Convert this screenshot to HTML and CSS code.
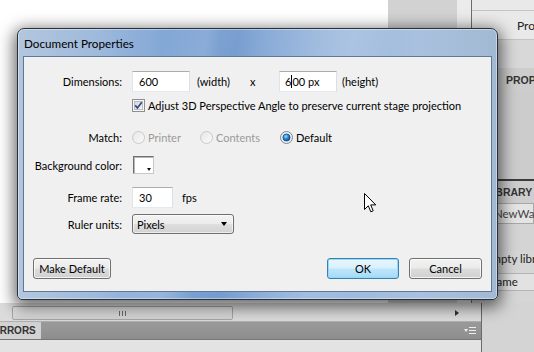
FILE: index.html
```html
<!DOCTYPE html>
<html>
<head>
<meta charset="utf-8">
<link rel="stylesheet" href="styles.css">
</head>
<body>
<div class="app">
  <div class="upper">
    <div class="stage"></div>
    <div class="gutter"><div class="gutter-dark"></div><div class="gutter-light"></div></div>
    <div class="side">
      <div class="side-top"></div>
      <div class="side-row">Profile</div>
      <div class="side-gap"></div>
      <div class="side-head">PROPERTIES</div>
      <div class="side-fill"></div>
      <div class="lib-head">LIBRARY</div>
      <div class="lib-doc">NewWave.fla</div>
      <div class="lib-gap"></div>
      <div class="lib-empty">Empty library</div>
      <div class="lib-col">Name</div>
      <div class="lib-rest"></div>
    </div>
  </div>
  <div class="lower">
    <div class="lower-left">
      <div class="hscroll">
        <div class="thumb"><span class="grip"></span><span class="grip"></span><span class="grip"></span></div>
        <span class="arrow-r"></span>
      </div>
      <div class="tabbar">
        <div class="tab"><span class="tab-text">ERRORS</span></div>
        <span class="menu"><span class="menu-tri"></span><span class="menu-lines"></span></span>
      </div>
      <div class="errbody"></div>
    </div>
    <div class="lower-right"></div>
  </div>

  <div class="dialog">
    <div class="titlebar">Document Properties</div>
    <div class="panel">
      <div class="row r-dim">
        <div class="label">Dimensions:</div>
        <div class="ctrls">
          <div class="input w58">600</div>
          <span class="t-width">(width)</span>
          <span class="t-x">x</span>
          <div class="input w58 in2">6<span class="caret"></span>00 px</div>
          <span class="t-height">(height)</span>
        </div>
      </div>
      <div class="row r-chk">
        <div class="label"></div>
        <div class="ctrls">
          <svg class="chk" width="13" height="13" viewBox="0 0 13 13">
            <defs>
              <linearGradient id="cg" x1="0" y1="0" x2="1" y2="1">
                <stop offset="0" stop-color="#d0d6df"/>
                <stop offset="1" stop-color="#f4f6f9"/>
              </linearGradient>
            </defs>
            <rect x="0.5" y="0.5" width="12" height="12" fill="#f6f6f6" stroke="#8e8f8f"/>
            <rect x="2.5" y="2.5" width="8" height="8" fill="url(#cg)" stroke="#b8bec8"/>
            <path d="M3.2 6.4 L5.4 9 L9.8 3.2" stroke="#35477e" stroke-width="1.7" fill="none"/>
          </svg>
          <span class="chk-label">Adjust 3D Perspective Angle to preserve current stage projection</span>
        </div>
      </div>
      <div class="row r-match">
        <div class="label">Match:</div>
        <div class="ctrls">
          <span class="radio-item ri-printer">
            <svg width="13" height="13" viewBox="0 0 13 13">
              <defs>
                <linearGradient id="rg" x1="0" y1="0" x2="1" y2="1">
                  <stop offset="0" stop-color="#e6e6e6"/>
                  <stop offset="1" stop-color="#fbfbfb"/>
                </linearGradient>
              </defs>
              <circle cx="6.5" cy="6.5" r="6" fill="url(#rg)" stroke="#c9c9c9"/>
            </svg>
            <span class="dis">Printer</span>
          </span>
          <span class="radio-item ri-contents">
            <svg width="13" height="13" viewBox="0 0 13 13">
              <circle cx="6.5" cy="6.5" r="6" fill="url(#rg)" stroke="#c9c9c9"/>
            </svg>
            <span class="dis">Contents</span>
          </span>
          <span class="radio-item ri-default">
            <svg width="13" height="13" viewBox="0 0 13 13">
              <defs>
                <radialGradient id="dot" cx="0.4" cy="0.35" r="0.7">
                  <stop offset="0" stop-color="#8ee0ff"/>
                  <stop offset="0.45" stop-color="#2e8fd8"/>
                  <stop offset="1" stop-color="#0d3c78"/>
                </radialGradient>
              </defs>
              <circle cx="6.5" cy="6.5" r="6" fill="#eef0f3" stroke="#7e858d"/>
              <circle cx="6.5" cy="6.5" r="3.6" fill="url(#dot)" stroke="#1d4d85" stroke-width="0.8"/>
            </svg>
            <span>Default</span>
          </span>
        </div>
      </div>
      <div class="row r-bg">
        <div class="label">Background color:</div>
        <div class="ctrls">
          <div class="swatch"><span class="sw-tri"></span></div>
        </div>
      </div>
      <div class="row r-fr">
        <div class="label">Frame rate:</div>
        <div class="ctrls">
          <div class="input w41">30</div>
          <span class="t-fps">fps</span>
        </div>
      </div>
      <div class="row r-ru">
        <div class="label">Ruler units:</div>
        <div class="ctrls">
          <div class="select"><span>Pixels</span><span class="sel-tri"></span></div>
        </div>
      </div>
      <div class="buttons">
        <div class="btn btn-md">Make Default</div>
        <div class="spacer"></div>
        <div class="btn btn-ok">OK</div>
        <div class="btn btn-cancel">Cancel</div>
      </div>
    </div>
  </div>

  <svg class="cursor" width="13" height="20" viewBox="0 0 13 20">
    <path d="M0.5 0.5 L0.5 16.5 L4.3 12.8 L6.8 18.8 L9.2 17.8 L6.7 11.9 L11.8 11.9 Z" fill="#fff" stroke="#000" stroke-width="1"/>
  </svg>
</div>
</body>
</html>
```

FILE: styles.css
```css
* { box-sizing: border-box; }
html, body { margin: 0; padding: 0; }
body {
  width: 534px;
  height: 352px;
  overflow: hidden;
  font-family: "Lato", "Noto Sans", sans-serif;
  font-size: 11px;
  color: #000;
}
.app {
  position: relative;
  width: 534px;
  height: 352px;
  display: flex;
  flex-direction: column;
  background: #d8d8d8;
}
.upper {
  display: flex;
  height: 303px;
}
.stage {
  width: 388px;
  background: #fff;
}
.gutter {
  width: 84px;
  display: flex;
  border-right: 1px solid #6d6d6d;
}
.gutter-dark { width: 69px; background: #d2d2d2; }
.gutter-light { flex: 1; background: #ebebeb; }
.side {
  width: 62px;
  display: flex;
  flex-direction: column;
  background: #d6d6d6;
  font-size: 11.5px;
  white-space: nowrap;
  overflow: hidden;
}
.side-top { height: 11px; background: #e9e9e9; border-bottom: 1px solid #c4c4c4; }
.side-row {
  height: 29px;
  background: #e9e9e9;
  border-bottom: 1px solid #c4c4c4;
  padding-left: 45px;
  line-height: 29px;
  font-size: 12px;
  color: #222;
}
.side-gap { height: 28px; background: #d8d8d8; }
.side-head {
  height: 24px;
  line-height: 24px;
  background: #cdcdcd;
  padding-left: 34px;
  font-family: "Liberation Sans", sans-serif;
  font-weight: bold;
  font-size: 10.5px;
  color: #333;
}
.side-fill { height: 89px; background: #cccccc; border-bottom: 2px solid #3c3c3c; }
.lib-head {
  height: 22px;
  line-height: 22px;
  background: #cdcdcd;
  padding-left: 14px;
  font-family: "Liberation Sans", sans-serif;
  font-weight: bold;
  font-size: 10.5px;
  color: #333;
}
.lib-doc {
  height: 21px;
  line-height: 19px;
  margin-left: 12px;
  background: #e4e4e4;
  border: 1px solid #a8a8a8;
  padding-left: 9px;
  color: #444;
}
.lib-gap { height: 27px; background: #d4d4d4; }
.lib-empty {
  height: 22px;
  line-height: 16px;
  padding-left: 13px;
  color: #222;
}
.lib-col {
  height: 18px;
  line-height: 16px;
  background: #e2e2e2;
  border-top: 1px solid #b5b5b5;
  border-bottom: 1px solid #b5b5b5;
  padding-left: 16px;
  color: #222;
}
.lib-rest { flex: 1; background: #d6d6d6; }

.lower { display: flex; flex: 1; }
.lower-left {
  width: 482px;
  display: flex;
  flex-direction: column;
  border-right: 1px solid #6a6a6a;
}
.lower-right { flex: 1; background: #d4d4d4; }
.hscroll {
  height: 19px;
  background: #dcdcdc;
  display: flex;
  align-items: center;
  padding-left: 12px;
  border-bottom: 1px solid #b0b0b0;
}
.thumb {
  width: 221px;
  height: 14px;
  margin-top: 2px;
  border: 1px solid #a6a6a6;
  border-radius: 2px;
  background: linear-gradient(#e6e6e6, #d4d4d4);
  display: flex;
  justify-content: center;
  align-items: center;
  gap: 2px;
}
.grip { width: 1px; height: 5px; background: #6c6c6c; }
.arrow-r {
  margin-left: auto;
  margin-right: 22px;
  margin-top: 2px;
  width: 0; height: 0;
  border-top: 3px solid transparent;
  border-bottom: 3px solid transparent;
  border-left: 4px solid #333;
}
.tabbar {
  height: 18px;
  background: linear-gradient(#9b9b9b, #8d8d8d);
  display: flex;
  align-items: stretch;
  border-bottom: 1px solid #777;
}
.tab {
  width: 41px;
  background: #d2d2d2;
  overflow: hidden;
  white-space: nowrap;
  font-family: "Liberation Sans", sans-serif;
  font-weight: bold;
  font-size: 10px;
  line-height: 18px;
  color: #333;
}
.tab-text { margin-left: -7px; }
.menu {
  margin-left: auto;
  margin-right: 5px;
  display: flex;
  align-items: center;
  gap: 1px;
}
.menu-tri {
  width: 0; height: 0;
  border-left: 2px solid transparent;
  border-right: 2px solid transparent;
  border-top: 3px solid #eee;
}
.menu-lines {
  width: 7px;
  height: 7px;
  background: linear-gradient(#eee 0 1px, transparent 1px 3px, #eee 3px 4px, transparent 4px 6px, #eee 6px 7px);
}
.errbody { flex: 1; background: #e3e3e3; }

/* Dialog */
.dialog {
  position: absolute;
  left: 17px;
  top: 28px;
  width: 481px;
  height: 272px;
  border: 1px solid #27313d;
  border-radius: 7px 7px 5px 5px;
  background:
    linear-gradient(100deg, rgba(255,255,255,0) 28%, rgba(255,255,255,0.16) 36%, rgba(255,255,255,0) 42%, rgba(255,255,255,0.14) 64%, rgba(255,255,255,0) 72%),
    linear-gradient(90deg, #b3c6dd 0%, #9fbadc 16%, #84a8d6 30%, #7098cd 42%, #86a9d6 52%, #9bb8dd 66%, #a9c1de 84%, #a2b9d3 100%);
  box-shadow: 0 4px 16px 3px rgba(0,0,0,0.6), inset 0 0 0 1px rgba(255,255,255,0.4);
  display: flex;
  flex-direction: column;
}
.titlebar {
  height: 27px;
  padding-left: 6px;
  padding-top: 1px;
  line-height: 26px;
  font-size: 11.7px;
  color: #000;
}
.panel {
  margin: 0 5px 7px 5px;
  flex: 1;
  background: #f0f0f0;
  border: 1px solid #5f7896;
  padding: 14px 9px 0 0;
  display: flex;
  flex-direction: column;
}
.row {
  display: flex;
  align-items: center;
}
.label {
  width: 98px;
  text-align: right;
  margin-right: 10px;
  white-space: nowrap;
}
.ctrls {
  display: flex;
  align-items: center;
  white-space: nowrap;
}
.r-dim { height: 21px; }
.r-chk { height: 18px; margin-top: 4px; }
.r-match { height: 18px; margin-top: 14px; }
.r-bg { height: 20px; margin-top: 9px; }
.r-fr { height: 21px; margin-top: 12px; }
.r-ru { height: 20px; margin-top: 6px; }

.input {
  height: 21px;
  background: #fff;
  border: 1px solid;
  border-color: #abadb3 #dbdfe6 #e3e9ef #e2e3ea;
  padding-left: 6px;
  line-height: 19px;
  display: flex;
  align-items: center;
}
.w58 { width: 58px; }
.w41 { width: 41px; }
.caret {
  display: inline-block;
  width: 1px;
  height: 13px;
  background: #000;
  margin: 0 0 0 0;
}
.t-width { margin-left: 7px; width: 53px; }
.t-x { width: 29px; }
.in2 { padding-left: 5px; }
.t-height { margin-left: 5px; }
.chk { margin-left: 0; flex: none; }
.chk-label { margin-left: 3px; }

.radio-item { display: flex; align-items: center; }
.radio-item svg { flex: none; margin-right: 3px; }
.ri-printer { width: 68px; }
.ri-contents { width: 80px; }
.dis { color: #9a9a9a; }

.swatch {
  position: relative;
  width: 21px;
  height: 18px;
  margin-left: 1px;
  background: #fff;
  border: 1px solid;
  border-color: #6f6f6f #c8c8c8 #c8c8c8 #6f6f6f;
  box-shadow: inset 1px 1px 0 #b8b8b8;
}
.sw-tri {
  position: absolute;
  right: 2px;
  bottom: 2px;
  width: 0; height: 0;
  border-left: 2.5px solid transparent;
  border-right: 2.5px solid transparent;
  border-top: 3px solid #111;
}
.t-fps { margin-left: 9px; }

.select {
  width: 102px;
  height: 20px;
  border: 1px solid #707070;
  border-radius: 3px;
  background: linear-gradient(#f3f3f3 0%, #ececec 48%, #dedede 52%, #d2d2d2 100%);
  box-shadow: inset 0 0 0 1px rgba(255,255,255,0.6);
  display: flex;
  align-items: center;
  padding-left: 4px;
  padding-right: 6px;
}
.sel-tri {
  margin-left: auto;
  width: 0; height: 0;
  border-left: 3.5px solid transparent;
  border-right: 3.5px solid transparent;
  border-top: 4px solid #000;
}

.buttons {
  display: flex;
  margin-top: 24px;
  height: 21px;
  padding-left: 9px;
}
.spacer { flex: 1; }
.btn {
  height: 21px;
  border: 1px solid #707070;
  border-radius: 3px;
  background: linear-gradient(#f2f2f2 0%, #ebebeb 48%, #dddddd 52%, #cfcfcf 100%);
  box-shadow: inset 0 0 0 1px rgba(255,255,255,0.75);
  display: flex;
  align-items: center;
  justify-content: center;
}
.btn-md { width: 78px; }
.btn-ok {
  width: 72px;
  border-color: #3c7fb1;
  background: linear-gradient(#eaf6fd 0%, #d9f0fc 48%, #bee6fd 52%, #a7d9f5 100%);
  box-shadow: inset 0 0 0 1px #8fdcf8;
}
.btn-cancel { width: 73px; margin-left: 10px; }

.cursor {
  position: absolute;
  left: 364px;
  top: 193px;
}
```
